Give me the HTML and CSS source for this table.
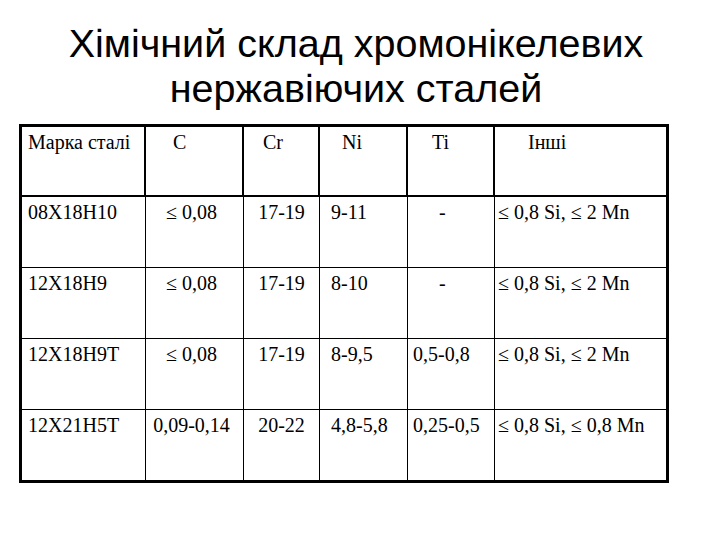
FILE: index.html
```html
<!DOCTYPE html>
<html lang="uk">
<head>
<meta charset="utf-8">
<title>Хімічний склад хромонікелевих нержавіючих сталей</title>
<link rel="stylesheet" href="styles.css">
</head>
<body>
<h1 class="title">Хімічний склад хромонікелевих<br>нержавіючих сталей</h1>
<table class="steel">
  <thead>
    <tr>
      <th class="c1">Марка сталі</th>
      <th class="c2">C</th>
      <th class="c3">Cr</th>
      <th class="c4">Ni</th>
      <th class="c5">Ti</th>
      <th class="c6">Інші</th>
    </tr>
  </thead>
  <tbody>
    <tr>
      <td class="c1">08Х18Н10</td>
      <td class="c2">≤ 0,08</td>
      <td class="c3">17-19</td>
      <td class="c4">9-11</td>
      <td class="c5 dash">-</td>
      <td class="c6">≤ 0,8 Si, ≤ 2 Mn</td>
    </tr>
    <tr>
      <td class="c1">12Х18Н9</td>
      <td class="c2">≤ 0,08</td>
      <td class="c3">17-19</td>
      <td class="c4">8-10</td>
      <td class="c5 dash">-</td>
      <td class="c6">≤ 0,8 Si, ≤ 2 Mn</td>
    </tr>
    <tr>
      <td class="c1">12Х18Н9Т</td>
      <td class="c2">≤ 0,08</td>
      <td class="c3">17-19</td>
      <td class="c4">8-9,5</td>
      <td class="c5">0,5-0,8</td>
      <td class="c6">≤ 0,8 Si, ≤ 2 Mn</td>
    </tr>
    <tr class="last">
      <td class="c1">12Х21Н5Т</td>
      <td class="c2">0,09-0,14</td>
      <td class="c3">20-22</td>
      <td class="c4">4,8-5,8</td>
      <td class="c5">0,25-0,5</td>
      <td class="c6">≤ 0,8 Si, ≤ 0,8 Mn</td>
    </tr>
  </tbody>
</table>
</body>
</html>
```

FILE: styles.css
```css
html, body {
  margin: 0;
  padding: 0;
  background: #ffffff;
  color: #000000;
}

body {
  width: 720px;
  height: 540px;
  overflow: hidden;
}

.title {
  margin: 0;
  padding: 21px 8px 0 0;
  font-family: "Liberation Sans", Arial, sans-serif;
  font-weight: normal;
  font-size: 39.5px;
  line-height: 45px;
  text-align: center;
  height: 91px;
}

.steel {
  margin: 12px 0 0 19px;
  width: 650px;
  border: 3px solid #000;
  border-collapse: separate;
  border-spacing: 0;
  table-layout: fixed;
  font-family: "Liberation Serif", "Times New Roman", serif;
  font-size: 20px;
  line-height: 23px;
}

.steel th,
.steel td {
  box-sizing: border-box;
  vertical-align: top;
  text-align: left;
  font-weight: normal;
  padding: 4px 0 0 0;
  white-space: nowrap;
  border-right: 1px solid #000;
  border-bottom: 1px solid #000;
}

.steel th {
  height: 70px;
  border-right-width: 2px;
  border-bottom-width: 2px;
}

.steel td {
  height: 71px;
}

.steel .last td {
  border-bottom: none;
  height: 70px;
}

.steel .c6 {
  border-right: none;
}

/* column widths */
.steel .c1 { width: 124px; }
.steel .c2 { width: 98px; }
.steel .c3 { width: 76px; }
.steel .c4 { width: 88px; }
.steel .c5 { width: 87px; }
.steel .c6 { width: 171px; }

/* header text positions */
.steel th.c1 { padding-left: 6px; }
.steel th.c2 { padding-left: 27px; }
.steel th.c3 { padding-left: 19px; }
.steel th.c4 { padding-left: 22px; }
.steel th.c5 { padding-left: 24px; }
.steel th.c6 { padding-left: 33px; }

/* body text positions */
.steel td.c1 { padding-left: 6px; }
.steel td.c2 { text-align: center; padding-right: 6px; }
.steel td.c3 { text-align: center; }
.steel td.c4 { padding-left: 11px; }
.steel td.c5 { padding-left: 5px; }
.steel td.dash { padding-left: 31px; }
.steel td.c6 { padding-left: 3px; }
```
